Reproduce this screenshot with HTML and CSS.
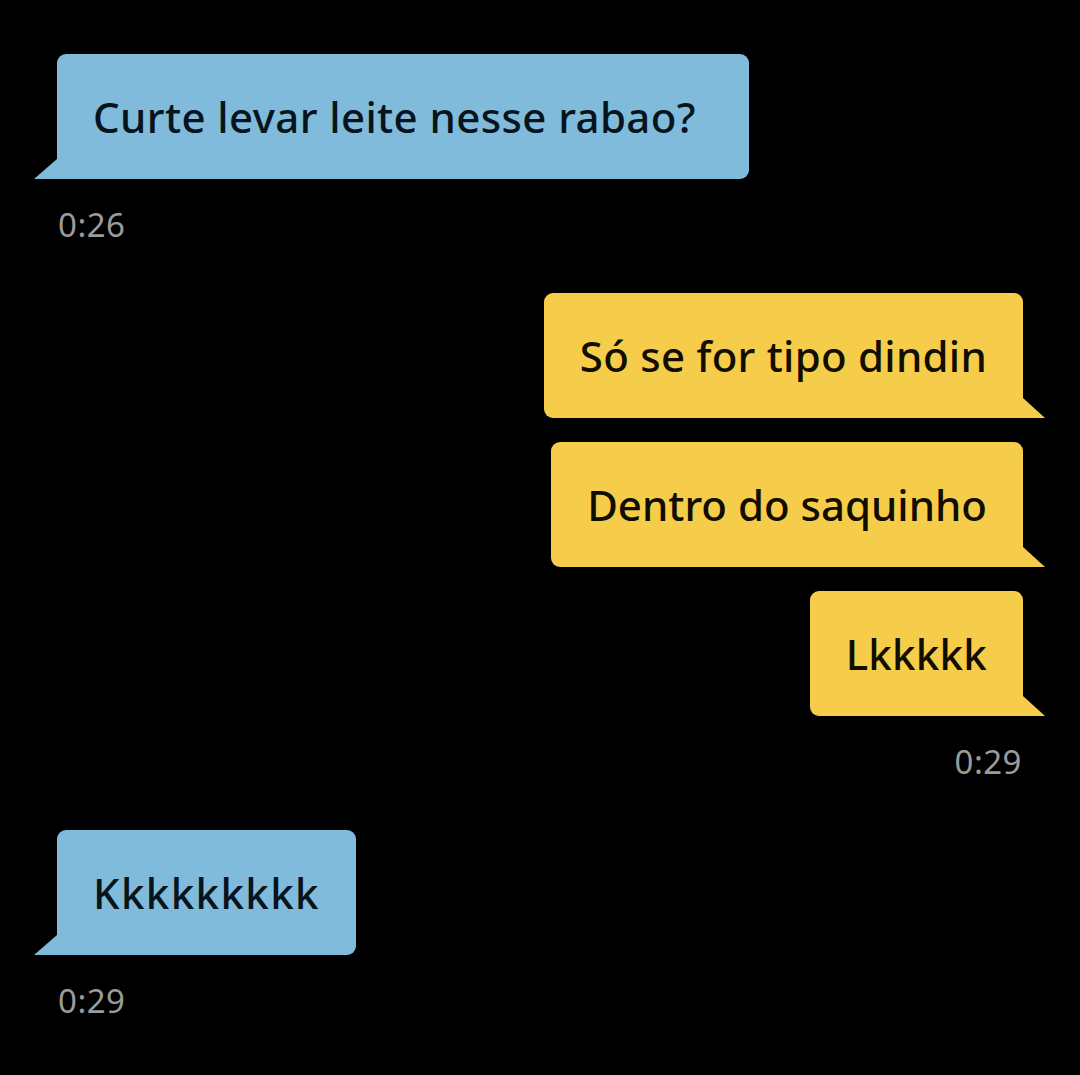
FILE: index.html
```html
<!DOCTYPE html>
<html lang="pt">
<head>
<meta charset="utf-8">
<title>Chat</title>
<link rel="stylesheet" href="styles.css">
</head>
<body>
<main class="chat">
  <section class="group group--in">
    <div class="bubble bubble--in bubble--tail bubble--trail">Curte levar leite nesse rabao?</div>
    <div class="time">0:26</div>
  </section>
  <section class="group group--out">
    <div class="bubble bubble--out bubble--tail">Só se for tipo dindin</div>
    <div class="bubble bubble--out bubble--tail bubble--tight">Dentro do saquinho</div>
    <div class="bubble bubble--out bubble--tail">Lkkkkk</div>
    <div class="time">0:29</div>
  </section>
  <section class="group group--in">
    <div class="bubble bubble--in bubble--tail bubble--k">Kkkkkkkkk</div>
    <div class="time">0:29</div>
  </section>
</main>
</body>
</html>
```

FILE: styles.css
```css
html, body {
  margin: 0;
  padding: 0;
  background: #000;
}

body {
  font-family: "Noto Sans", "Open Sans", sans-serif;
  width: 1080px;
  height: 1075px;
  overflow: hidden;
}

.chat {
  display: flex;
  flex-direction: column;
  gap: 48px;
  padding: 54px 57px 0 57px;
}

.group {
  display: flex;
  flex-direction: column;
  gap: 24px;
}

.group--in {
  align-items: flex-start;
}

.group--out {
  align-items: flex-end;
}

.bubble {
  position: relative;
  box-sizing: border-box;
  height: 125px;
  padding: 0 36px;
  display: flex;
  align-items: center;
  font-size: 42px;
  font-weight: 500;
  letter-spacing: 0.25px;
  line-height: 46px;
  white-space: nowrap;
}

.bubble--in {
  background: #80bbdb;
  color: #08141c;
  border-radius: 9px 9px 9px 0;
}

.bubble--out {
  background: #f6cd4a;
  color: #110e00;
  border-radius: 9px 9px 0 9px;
}

.bubble--trail {
  letter-spacing: 0.4px;
  padding-right: 53px;
}

.bubble--tight {
  letter-spacing: 0px;
}

.bubble--k {
  letter-spacing: 1.4px;
}

.bubble--tail::after {
  content: "";
  position: absolute;
  bottom: 0;
  width: 23px;
  height: 20px;
  background: inherit;
}

.bubble--in.bubble--tail::after {
  left: -23px;
  clip-path: polygon(100% 0, 100% 100%, 0 100%);
}

.bubble--out.bubble--tail::after {
  right: -22px;
  width: 22px;
  clip-path: polygon(0 0, 100% 100%, 0 100%);
}

.time {
  margin-top: 2px;
  font-size: 33px;
  line-height: 40px;
  letter-spacing: 0.5px;
  color: #9b9b9b;
  padding: 0 1px;
}
```
